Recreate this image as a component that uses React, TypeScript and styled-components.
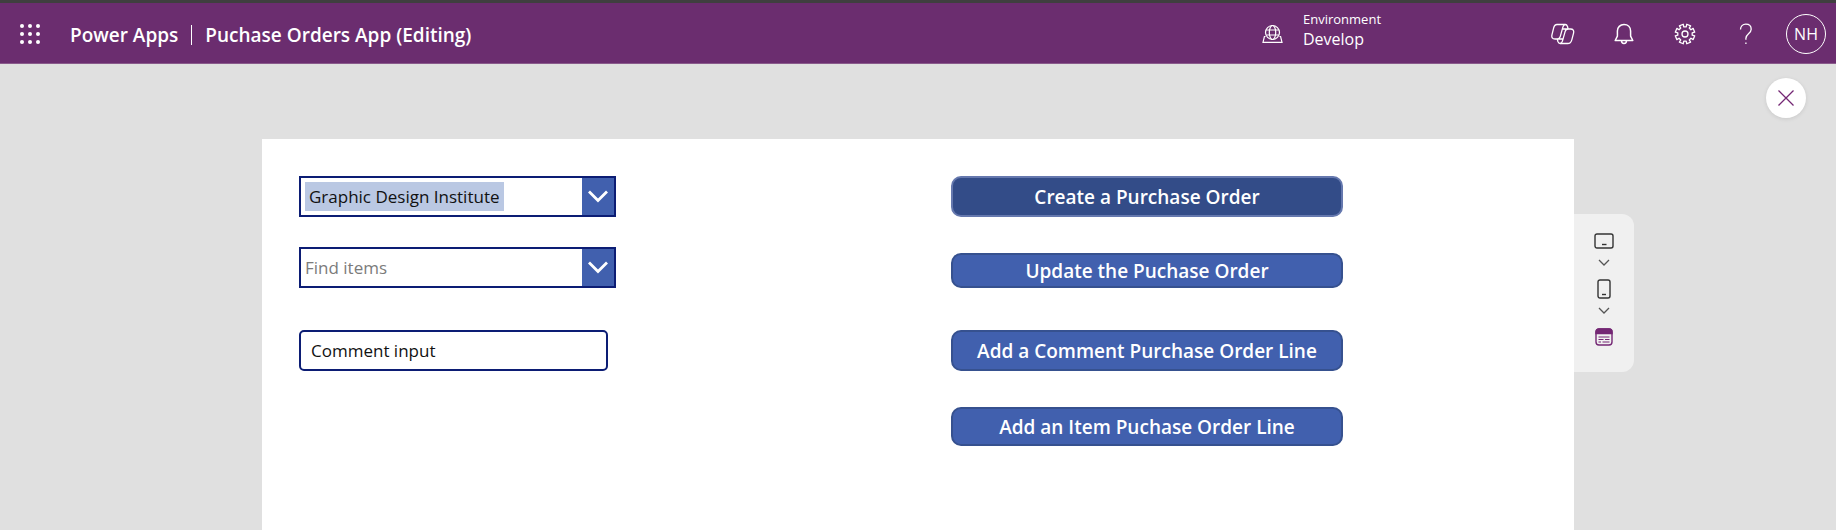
import React from "react";
import styled, { createGlobalStyle } from "styled-components";

const GlobalStyle = createGlobalStyle`
  * { box-sizing: border-box; }
  body { margin: 0; background: #e0e0e0; font-family: "Open Sans", "Noto Sans", sans-serif; }
  button, input, select { font-family: inherit; margin: 0; }
`;

const Page = styled.div`
  min-height: 100vh;
  display: flex;
  flex-direction: column;
`;

const Header = styled.header`
  display: flex;
  align-items: stretch;
  height: 64px;
  flex: none;
  padding-top: 2px;
  border-top: 3px solid #3f3f3f;
  border-bottom: 1px solid #8a5a8c;
  background: #6b2d6f;
  color: #fff;
`;

const IconButton = styled.button<{ $width?: number }>`
  display: flex;
  align-items: center;
  justify-content: center;
  width: ${(p) => p.$width ?? 61}px;
  padding: 0;
  border: 0;
  background: transparent;
  color: inherit;
`;

const Title = styled.h1`
  display: flex;
  align-items: center;
  gap: 13px;
  margin: 0 auto 0 11px;
  padding-top: 2px;
  font-size: 19px;
  line-height: 28px;
  font-weight: 600;
  white-space: nowrap;
`;

const TitleDivider = styled.span`
  width: 1px;
  height: 20px;
  background: #fff;
`;

const Environment = styled.div`
  display: flex;
  align-items: center;
  gap: 20px;
  width: 270px;
`;

const EnvironmentText = styled.div`
  display: flex;
  flex-direction: column;
  padding-bottom: 8px;
`;

const EnvironmentLabel = styled.span`
  font-size: 13px;
  line-height: 18px;
`;

const EnvironmentName = styled.span`
  font-size: 16px;
  line-height: 22px;
`;

const Avatar = styled.span`
  display: flex;
  align-items: center;
  justify-content: center;
  width: 40px;
  height: 40px;
  border: 1px solid #fff;
  border-radius: 50%;
  font-size: 16px;
`;

const CloseBar = styled.div`
  display: flex;
  justify-content: flex-end;
  height: 75px;
  padding: 14px 30px 0;
`;

const CloseButton = styled.button`
  display: flex;
  align-items: center;
  justify-content: center;
  width: 40px;
  height: 40px;
  padding: 0;
  border: 0;
  border-radius: 50%;
  background: #fff;
  color: #742774;
  box-shadow: 0 1px 4px rgba(0, 0, 0, 0.1);
`;

const Stage = styled.main`
  flex: 1;
  display: grid;
  grid-template-columns: 262px 1fr 262px;
`;

const Canvas = styled.section`
  grid-column: 2;
  display: grid;
  grid-template-columns: 1fr 392px;
  padding: 37px 231px 37px 37px;
  background: #fff;
`;

const Fields = styled.div`
  display: flex;
  flex-direction: column;
  align-items: flex-start;
  gap: 30px;
`;

const Combo = styled.div`
  display: flex;
  align-items: center;
  justify-content: space-between;
  width: 317px;
  height: 41px;
  padding-left: 4px;
  border: 2px solid #0c1d74;
  background: #fff;
`;

const ComboSelect = styled.select<{ $selected?: boolean }>`
  appearance: none;
  height: 29px;
  padding: 0 ${(p) => (p.$selected ? 4 : 0)}px;
  border: 0;
  border-radius: 0;
  background: ${(p) => (p.$selected ? "#bac8e3" : "transparent")};
  color: ${(p) => (p.$selected ? "#111" : "#7b7b7b")};
  font-size: 17px;
`;

const ComboArrow = styled.button`
  display: flex;
  align-items: center;
  justify-content: center;
  width: 32px;
  height: 37px;
  padding: 0;
  border: 0;
  background: #4160ae;
`;

const CommentInput = styled.input`
  width: 309px;
  height: 41px;
  margin-top: 12px;
  padding: 0 10px;
  border: 2px solid #0c1d74;
  border-radius: 5px;
  color: #111;
  font-size: 17px;
`;

const Actions = styled.div`
  display: grid;
  grid-auto-rows: 77px;
  align-items: start;
  align-content: start;
`;

const ActionButton = styled.button<{ $height: number; $hovered?: boolean }>`
  height: ${(p) => p.$height}px;
  padding: 0;
  border: 2px solid ${(p) => (p.$hovered ? "#6578ae" : "#36518f")};
  border-radius: 10px;
  background: ${(p) => (p.$hovered ? "#334c88" : "#4160ae")};
  color: #fff;
  font-size: 19px;
  font-weight: 600;
`;

const DevicePanel = styled.aside`
  display: flex;
  flex-direction: column;
  align-items: center;
  align-self: start;
  width: 60px;
  margin-top: 75px;
  padding: 16px 0 24px;
  border-radius: 0 12px 12px 0;
  background: #f0f0f0;
  color: #333;
`;

const DeviceButton = styled.button`
  display: flex;
  align-items: center;
  height: 22px;
  padding: 0;
  border: 0;
  background: transparent;
  color: inherit;
`;

const Expand = styled(DeviceButton)`
  height: 26px;
  padding-bottom: 5px;
  color: #555;
`;

const DownChevron = () => (
  <svg width="12" height="7" viewBox="0 0 12 7" fill="none" stroke="currentColor" strokeWidth="1.3">
    <path d="M1 1l5 5 5-5" />
  </svg>
);

const ComboChevron = () => (
  <svg width="20" height="13" viewBox="0 0 20 13" fill="none" stroke="#fff" strokeWidth="2.8">
    <path d="M1 1.5l9 9 9-9" />
  </svg>
);

const WaffleIcon = () => (
  <svg width="20" height="20" viewBox="0 0 20 20" fill="#fff">
    {[2, 10, 18].map((y) => [2, 10, 18].map((x) => <circle key={`${x}-${y}`} cx={x} cy={y} r="2" />))}
  </svg>
);

const gearPoints = Array.from({ length: 8 }, (_, i) => {
  const at = (deg: number, r: number) => {
    const a = ((i * 45 + 22.5 + deg) * Math.PI) / 180;
    return `${(11 + r * Math.cos(a)).toFixed(2)},${(11 + r * Math.sin(a)).toFixed(2)}`;
  };
  return [at(-13, 7.3), at(-12, 9.9), at(12, 9.9), at(13, 7.3)].join(" ");
}).join(" ");

const actions = [
  { label: "Create a Purchase Order", height: 41, hovered: true },
  { label: "Update the Puchase Order", height: 35 },
  { label: "Add a Comment Purchase Order Line", height: 41 },
  { label: "Add an Item Puchase Order Line", height: 39 },
];

export default function App() {
  return (
    <Page>
      <GlobalStyle />
      <Header>
        <IconButton $width={59} aria-label="App launcher"><WaffleIcon /></IconButton>
        <Title>
          <span>Power Apps</span>
          <TitleDivider />
          <span>Puchase Orders App (Editing)</span>
        </Title>
        <Environment>
          <svg width="21" height="20" viewBox="0 0 21 20" fill="none" stroke="#fff" strokeWidth="1.2">
            <circle cx="10.5" cy="8.5" r="7" />
            <ellipse cx="10.5" cy="8.5" rx="3.2" ry="7" />
            <path d="M4.2 6h12.6M4.2 11h12.6M3.5 12.5H2.4L1 18.4h19l-1.4-5.9h-1.1" />
          </svg>
          <EnvironmentText>
            <EnvironmentLabel>Environment</EnvironmentLabel>
            <EnvironmentName>Develop</EnvironmentName>
          </EnvironmentText>
        </Environment>
        <IconButton aria-label="Copilot">
          <svg width="24" height="22" viewBox="0 0 24 22" fill="none" stroke="#fff" strokeWidth="1.3" strokeLinejoin="round">
            <path d="M6 1.5h8.2c1.300 0 1.900.8 2.300 2l.6 2.500h2.400c2.600 0 3.700 1.700 3 4.300l-1.700 6.500c-.7 2.500-1.900 3.700-4.200 3.700H9.200c-1.300 0-1.900-.8-2.300-2L6.300 16H4c-2.600 0-3.700-1.700-3-4.300l1.600-6.500C3.200 2.700 4 1.500 6 1.500z" />
            <path d="M6.300 16c1.700 0 2.500-.9 3-2.600l2.600-9.300c.4-1.500 1-2.600 2.300-2.600M17.100 6c-1.700 0-2.500.9-3 2.600l-2.600 9.300c-.4 1.500-1 2.600-2.300 2.600M11.200 6h5.900M6.300 16h5.600" />
          </svg>
        </IconButton>
        <IconButton aria-label="Notifications">
          <svg width="20" height="22" viewBox="0 0 20 22" fill="none" stroke="#fff" strokeWidth="1.5" strokeLinejoin="round">
            <path d="M10 1.5c-3.900 0-6.600 2.800-6.600 6.600v5L1.200 17.500h17.600l-2.200-4.400v-5c0-3.800-2.700-6.600-6.600-6.600zM7.500 17.800c0 3.500 5 3.500 5 0" />
          </svg>
        </IconButton>
        <IconButton aria-label="Settings">
          <svg width="22" height="22" viewBox="0 0 22 22" fill="none" stroke="#fff" strokeWidth="1.3" strokeLinejoin="round">
            <polygon points={gearPoints} />
            <circle cx="11" cy="11" r="3" />
          </svg>
        </IconButton>
        <IconButton aria-label="Help">
          <svg width="14" height="22" viewBox="0 0 14 22" fill="none" stroke="#fff" strokeWidth="1.3">
            <path d="M1.5 6.500c0-3.300 2.200-5.300 5.300-5.300s5.400 1.900 5.400 5c0 4.300-5.300 4.800-5.300 9v1.600M6.900 19.500v1.500" />
          </svg>
        </IconButton>
        <IconButton $width={60} aria-label="Account"><Avatar>NH</Avatar></IconButton>
      </Header>
      <CloseBar>
        <CloseButton aria-label="Close preview">
          <svg width="16" height="16" viewBox="0 0 16 16" stroke="currentColor" strokeWidth="1.3">
            <path d="M.5.5l15 15M15.5.5l-15 15" />
          </svg>
        </CloseButton>
      </CloseBar>
      <Stage>
        <Canvas>
          <Fields>
            <Combo>
              <ComboSelect $selected aria-label="Vendor">
                <option>Graphic Design Institute</option>
              </ComboSelect>
              <ComboArrow aria-label="Open vendors"><ComboChevron /></ComboArrow>
            </Combo>
            <Combo>
              <ComboSelect aria-label="Items">
                <option>Find items</option>
              </ComboSelect>
              <ComboArrow aria-label="Open items"><ComboChevron /></ComboArrow>
            </Combo>
            <CommentInput aria-label="Comment" defaultValue="Comment input" />
          </Fields>
          <Actions>
            {actions.map((a) => (
              <ActionButton key={a.label} $height={a.height} $hovered={a.hovered}>{a.label}</ActionButton>
            ))}
          </Actions>
        </Canvas>
        <DevicePanel>
          <DeviceButton aria-label="Tablet">
            <svg width="20" height="16" viewBox="0 0 20 16" fill="none" stroke="currentColor" strokeWidth="1.4">
              <rect x="1" y="1" width="18" height="14" rx="2" />
              <path d="M8 11.5h4.5" />
            </svg>
          </DeviceButton>
          <Expand aria-label="Tablet sizes"><DownChevron /></Expand>
          <DeviceButton aria-label="Phone">
            <svg width="14" height="20" viewBox="0 0 14 20" fill="none" stroke="currentColor" strokeWidth="1.4">
              <rect x="1" y="1" width="12" height="18" rx="2" />
              <path d="M5 15.5h4" />
            </svg>
          </DeviceButton>
          <Expand aria-label="Phone sizes"><DownChevron /></Expand>
          <DeviceButton aria-label="Form">
            <svg width="18" height="18" viewBox="0 0 18 18" fill="none" stroke="#742774" strokeWidth="1.4">
              <rect x="1" y="1" width="16" height="16" rx="3" />
              <path d="M1 4a3 3 0 0 1 3-3h10a3 3 0 0 1 3 3v1.500H1z" fill="#742774" />
              <path d="M3.500 9h11M3.500 11.500h5M10 11.500h4.500M3.500 14h2.500M7.500 14h7" strokeWidth="1.2" />
            </svg>
          </DeviceButton>
        </DevicePanel>
      </Stage>
    </Page>
  );
}
